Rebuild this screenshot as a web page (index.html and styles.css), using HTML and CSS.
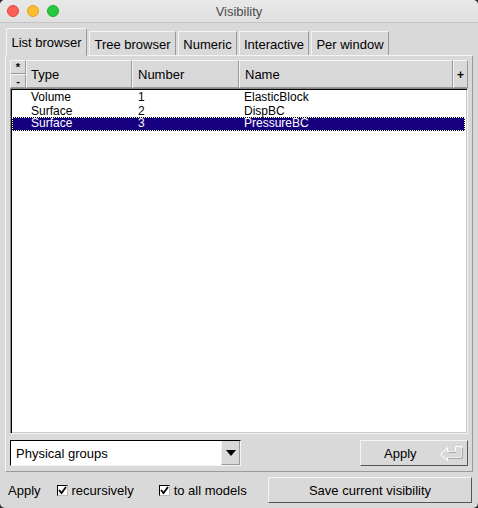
FILE: index.html
```html
<!DOCTYPE html>
<html>
<head>
<meta charset="utf-8">
<link rel="stylesheet" href="styles.css">
</head>
<body>
<div class="window">
  <div class="titlebar">
    <div class="lights">
      <span class="light red"></span>
      <span class="light yellow"></span>
      <span class="light green"></span>
    </div>
    <div class="title">Visibility</div>
  </div>
  <div class="content">
    <div class="tabs">
      <div class="tab active w1">List browser</div>
      <div class="tab w2">Tree browser</div>
      <div class="tab w3">Numeric</div>
      <div class="tab w4">Interactive</div>
      <div class="tab w5">Per window</div>
    </div>
    <div class="panel">
      <div class="header">
        <div class="starcol">
          <div class="mini">*</div>
          <div class="mini">-</div>
        </div>
        <div class="hcell first">Type</div>
        <div class="hcell">Number</div>
        <div class="hcell">Name</div>
        <div class="hcell plus">+</div>
      </div>
      <div class="list">
        <div class="row"><span>Volume</span><span>1</span><span>ElasticBlock</span></div>
        <div class="row"><span>Surface</span><span>2</span><span>DispBC</span></div>
        <div class="row selected"><span>Surface</span><span>3</span><span>PressureBC</span></div>
      </div>
      <div class="controls">
        <div class="choice">
          <span class="choice-text">Physical groups</span>
          <span class="choice-btn"><svg width="10" height="6" viewBox="0 0 10 6"><polygon points="0,0 10,0 5,6" fill="#000"/></svg></span>
        </div>
        <div class="btn apply">
          <span class="apply-label">Apply</span>
          <svg class="ret" width="24" height="16" viewBox="0 0 24 16">
            <path d="M1.5 9.5 L8.5 2.5 L8.5 6.5 L16.5 6.5 L16.5 1.5 L22.5 1.5 L22.5 12.5 L8.5 12.5 L8.5 15.5 Z" fill="none" stroke="#ffffff" stroke-width="1"/>
            <path d="M22.5 2 L22.5 12.5 L8.5 12.5 M16.5 6.5 L9 6.5" fill="none" stroke="#9a9a9a" stroke-width="1" transform="translate(0.8 0.8)"/>
          </svg>
        </div>
      </div>
    </div>
    <div class="bottom">
      <span class="blabel">Apply</span>
      <span class="check c1"><svg width="9" height="9" viewBox="0 0 9 9"><path d="M1 4 L3.5 7 L8 1" fill="none" stroke="#000" stroke-width="1.8"/></svg></span>
      <span class="clabel">recursively</span>
      <span class="check c2"><svg width="9" height="9" viewBox="0 0 9 9"><path d="M1 4 L3.5 7 L8 1" fill="none" stroke="#000" stroke-width="1.8"/></svg></span>
      <span class="clabel">to all models</span>
      <div class="btn save">Save current visibility</div>
    </div>
  </div>
</div>
</body>
</html>
```

FILE: styles.css
```css
html, body {
  margin: 0;
  padding: 0;
}
body {
  background: #2a2a2a;
  width: 478px;
  height: 508px;
  overflow: hidden;
  font-family: "Liberation Sans", Arial, sans-serif;
  font-size: 13px;
  color: #000;
}
.window {
  width: 478px;
  height: 508px;
  border-radius: 5px;
  overflow: hidden;
  background: #d9d9d9;
  display: flex;
  flex-direction: column;
}
.titlebar {
  height: 22px;
  background: linear-gradient(#e8e8e8, #e0e0e0);
  border-bottom: 1px solid #c4c4c4;
  position: relative;
  display: flex;
  align-items: center;
  justify-content: center;
  flex-shrink: 0;
}
.lights {
  position: absolute;
  left: 7px;
  top: 5px;
  display: flex;
  gap: 8px;
}
.light {
  width: 12px;
  height: 12px;
  border-radius: 50%;
  box-sizing: border-box;
}
.red { background: #fe5f57; border: 1px solid #e1443e; }
.yellow { background: #febc2e; border: 1px solid #dea123; }
.green { background: #28c840; border: 1px solid #1aab29; }
.title {
  color: #4c4c4c;
  font-size: 13px;
  padding-top: 1px;
}
.content {
  flex: 1;
  padding-top: 5px;
  display: flex;
  flex-direction: column;
}
.tabs {
  display: flex;
  align-items: flex-end;
  gap: 2px;
  padding-left: 6px;
  height: 27px;
  position: relative;
  z-index: 2;
}
.tab {
  box-sizing: border-box;
  height: 24px;
  border-top: 1px solid #f4f4f4;
  border-left: 1px solid #f4f4f4;
  border-right: 1px solid #9a9a9a;
  display: flex;
  align-items: center;
  justify-content: center;
  padding-top: 1px;
  background: #d9d9d9;
}
.tab.active {
  height: 28px;
  margin-bottom: -1px;
  padding-top: 0;
  padding-bottom: 1px;
}
.w1 { width: 81px; }
.w2 { width: 87px; }
.w3 { width: 59px; }
.w4 { width: 70px; }
.w5 { width: 78px; }
.panel {
  margin: 0 5px;
  height: 417px;
  box-sizing: border-box;
  border-top: 1px solid #f4f4f4;
  border-left: 1px solid #f4f4f4;
  border-right: 1px solid #9a9a9a;
  border-bottom: 1px solid #9a9a9a;
  padding: 4px 4px 0 4px;
  display: flex;
  flex-direction: column;
}
.header {
  display: flex;
  height: 28px;
}
.starcol {
  width: 16px;
  display: flex;
  flex-direction: column;
}
.mini {
  height: 14px;
  box-sizing: border-box;
  border-top: 1px solid #f4f4f4;
  border-left: 1px solid #f4f4f4;
  border-right: 1px solid #9a9a9a;
  border-bottom: 1px solid #9a9a9a;
  font-size: 11px;
  font-weight: bold;
  display: flex;
  align-items: center;
  justify-content: center;
  line-height: 1;
}
.hcell {
  box-sizing: border-box;
  height: 28px;
  border-top: 1px solid #f4f4f4;
  border-left: 1px solid #f4f4f4;
  border-right: 1px solid #9a9a9a;
  border-bottom: 1px solid #9a9a9a;
  display: flex;
  align-items: center;
  padding-left: 5px;
  padding-top: 1px;
}
.hcell.first { padding-left: 4px; }
.hcell:nth-child(2) { width: 106px; }
.hcell:nth-child(3) { width: 107px; }
.hcell:nth-child(4) { width: 214px; }
.hcell.plus {
  width: 15px;
  padding-left: 0;
  justify-content: center;
  font-weight: bold;
  font-size: 12px;
}
.list {
  height: 346px;
  box-sizing: border-box;
  background: #fff;
  border-top: 1px solid #8a8a8a;
  border-left: 1px solid #8a8a8a;
  border-right: 1px solid #f4f4f4;
  border-bottom: 1px solid #f4f4f4;
  box-shadow: inset 1px 1px 0 #000, inset -1px -1px 0 #c8c8c8;
  padding: 1px 1px 0 1px;
}
.row {
  display: grid;
  grid-template-columns: 120px 106px 1fr;
  height: 13.5px;
  line-height: 13px;
  font-size: 12px;
  box-sizing: border-box;
  border: 1px solid transparent;
  margin-right: 1px;
}
.row span { padding-left: 5px; }
.row span:first-child { padding-left: 18px; }
.row.selected {
  color: #fff;
  border: 1px dotted #fff;
  background: linear-gradient(#170080, #170080) padding-box, linear-gradient(#000, #000) border-box;
  line-height: 11.5px;
}
.controls {
  display: flex;
  justify-content: space-between;
  margin-top: 6px;
  height: 26px;
}
.choice {
  width: 231px;
  box-sizing: border-box;
  background: #fff;
  border-top: 1px solid #000;
  border-left: 1px solid #000;
  border-right: 1px solid #f4f4f4;
  border-bottom: 1px solid #f4f4f4;
  display: flex;
  align-items: center;
  justify-content: space-between;
}
.choice-text {
  padding-left: 5px;
}
.choice-btn {
  width: 19px;
  height: 100%;
  box-sizing: border-box;
  background: #d9d9d9;
  border-left: 1px solid #f4f4f4;
  border-right: 1px solid #9a9a9a;
  border-bottom: 1px solid #9a9a9a;
  display: flex;
  align-items: center;
  justify-content: center;
}
.btn {
  box-sizing: border-box;
  height: 26px;
  background: #d9d9d9;
  border-top: 1px solid #f4f4f4;
  border-left: 1px solid #f4f4f4;
  border-right: 1px solid #555;
  border-bottom: 1px solid #555;
  display: flex;
  align-items: center;
  justify-content: center;
}
.apply {
  width: 108px;
  justify-content: flex-start;
  position: relative;
}
.apply-label {
  margin-left: 23px;
}
.ret {
  position: absolute;
  left: 78px;
  top: 4px;
}
.bottom {
  display: flex;
  align-items: center;
  height: 26px;
  margin-top: 5px;
  padding-left: 8px;
}
.check {
  width: 11px;
  height: 11px;
  box-sizing: border-box;
  background: #fff;
  border-top: 1px solid #000;
  border-left: 1px solid #000;
  border-right: 1px solid #bbb;
  border-bottom: 1px solid #bbb;
  display: flex;
  align-items: center;
  justify-content: center;
  margin-right: 4px;
}
.c1 { margin-left: 16px; }
.c2 { margin-left: 25px; }
.save {
  width: 204px;
  margin-left: auto;
  margin-right: 6px;
}
```
